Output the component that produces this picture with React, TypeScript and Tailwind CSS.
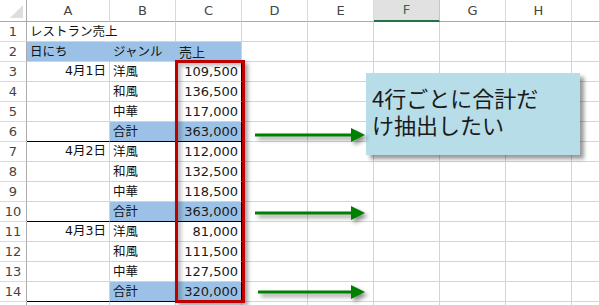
import React from 'react';

const COLS = ['A', 'B', 'C', 'D', 'E', 'F', 'G', 'H', ''];

type Row = { a?: string; b?: string; c?: string; blueA?: boolean; blueBC?: boolean; thick?: boolean };

const ROWS: Row[] = [
  { a: 'レストラン売上' },
  { a: '日にち', b: 'ジャンル', c: '売上', blueA: true, blueBC: true },
  { a: '4月1日', b: '洋風', c: '109,500' },
  { b: '和風', c: '136,500' },
  { b: '中華', c: '117,000' },
  { b: '合計', c: '363,000', blueBC: true, thick: true },
  { a: '4月2日', b: '洋風', c: '112,000' },
  { b: '和風', c: '132,500' },
  { b: '中華', c: '118,500' },
  { b: '合計', c: '363,000', blueBC: true, thick: true },
  { a: '4月3日', b: '洋風', c: '81,000' },
  { b: '和風', c: '111,500' },
  { b: '中華', c: '127,500' },
  { b: '合計', c: '320,000', blueBC: true, thick: true },
  {},
];

const font = "font-['DejaVu_Sans','Noto_Sans_CJK_JP',sans-serif]";
const jp = "font-['Noto_Sans_CJK_JP',sans-serif]";

const Arrow = ({ top, left, width }: { top: number; left: number; width: number }) => (
  <svg
    className="absolute drop-shadow-[3px_3px_2px_rgba(0,0,0,0.45)]"
    style={{ top, left }}
    width={width}
    height={16}
    viewBox={`0 0 ${width} 16`}
  >
    <rect x={0} y={6.5} width={width - 12} height={3} fill="#008000" />
    <polygon points={`${width - 14},1 ${width},8 ${width - 14},15`} fill="#008000" />
  </svg>
);

const App: React.FC = () => {
  return (
    <div className={`relative w-[600px] h-[305px] overflow-hidden bg-white text-[#111] ${font}`}>
      <div className="grid grid-cols-[27px_83px_66px_66px_66px_66px_66px_66px_66px_1fr]">
        {/* column header */}
        <div className="h-[22px] border-r border-b border-[#ababab] bg-white relative">
          <div className="absolute right-[3px] bottom-[3px] w-0 h-0 border-l-[13px] border-l-transparent border-b-[13px] border-b-[#dedede]" />
        </div>
        {COLS.map((c) =>
          c === 'F' ? (
            <div
              key={c}
              className="h-[22px] border-r border-[#c6c6c6] border-b-2 border-b-[#217346] bg-[#e1e1e1] flex items-center justify-center text-[13px] text-[#217346]"
            >
              {c}
            </div>
          ) : (
            <div
              key={c || 'x'}
              className="h-[22px] border-r border-[#dadada] border-b border-b-[#ababab] flex items-center justify-center text-[13px] text-[#444]"
            >
              {c}
            </div>
          )
        )}

        {ROWS.map((r, i) => (
          <React.Fragment key={i}>
            <div className="h-[20px] border-r border-[#ababab] border-b border-b-[#dadada] flex items-center justify-center text-[13px] text-[#444]">
              {i < 14 ? i + 1 : ''}
            </div>
            <div
              className={`h-[20px] border-r border-[#d4d4d4] border-b flex items-center px-[3px] text-[12.5px] whitespace-nowrap ${
                r.thick ? 'border-b-black' : 'border-b-[#d4d4d4]'
              } ${r.blueA ? 'bg-[#9bc2e6] border-r-[#9bc2e6]' : ''} ${i === 0 ? 'border-r-transparent' : ''} ${
                i >= 2 && i < 14 ? 'justify-end' : 'justify-start'
              }`}
            >
              <span className={i < 2 ? jp : ''}>{r.a}</span>
            </div>
            <div
              className={`h-[20px] border-r border-[#d4d4d4] border-b flex items-center px-[3px] text-[12.5px] whitespace-nowrap ${jp} ${
                r.thick ? 'border-b-black' : 'border-b-[#d4d4d4]'
              } ${r.blueBC ? 'bg-[#9bc2e6] border-r-[#9bc2e6]' : ''}`}
            >
              {r.b}
            </div>
            <div
              className={`h-[20px] border-r border-b flex items-center px-[3px] text-[13px] text-[#1a1a1a] whitespace-nowrap ${
                i >= 2 && i < 14 ? 'justify-end border-r-black' : 'justify-start border-r-[#d4d4d4]'
              } ${r.thick ? 'border-b-black' : 'border-b-[#d4d4d4]'} ${r.blueBC ? 'bg-[#9bc2e6]' : ''}`}
            >
              <span className={i === 1 ? jp : ''}>{r.c}</span>
            </div>
            {[0, 1, 2, 3, 4, 5].map((k) => (
              <div key={k} className="h-[20px] border-r border-b border-[#d4d4d4]" />
            ))}
          </React.Fragment>
        ))}
      </div>

      {/* red selection frame */}
      <div className="absolute left-[175px] top-[60px] w-[70px] h-[243px] border-[3px] border-[#c00000] shadow-[3px_3px_4px_rgba(0,0,0,0.35),inset_3px_3px_4px_rgba(0,0,0,0.25)]" />

      {/* callout */}
      <div
        className={`absolute left-[366px] top-[73px] w-[214px] h-[82px] bg-[#b7dde8] shadow-[4px_4px_4px_rgba(0,0,0,0.4)] px-[6px] pt-[11px] text-[22px] leading-[27px] text-[#1a1a1a] ${jp}`}
      >
        4行ごとに合計だ
        <br />
        け抽出したい
      </div>

      <Arrow top={127} left={255} width={110} />
      <Arrow top={205} left={255} width={110} />
      <Arrow top={284} left={258} width={107} />
    </div>
  );
};

export default App;
